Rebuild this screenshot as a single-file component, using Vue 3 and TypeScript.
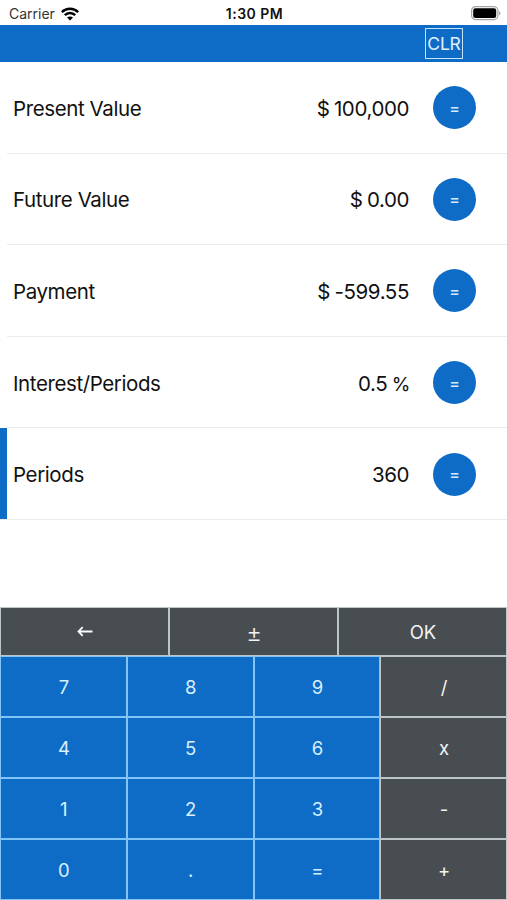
<script setup lang="ts">
interface Field {
  label: string
  prefix?: string
  value: string
  suffix?: string
  active?: boolean
}

interface Key {
  text: string
  tone: 'blue' | 'slate'
}

const fields: Field[] = [
  { label: 'Present Value', prefix: '$', value: '100,000' },
  { label: 'Future Value', prefix: '$', value: '0.00' },
  { label: 'Payment', prefix: '$', value: '-599.55' },
  { label: 'Interest/Periods', value: '0.5', suffix: '%' },
  { label: 'Periods', value: '360', active: true },
]

const rows = ['789/', '456x', '123-', '0.=+']
const keys: Key[] = rows.flatMap((row) =>
  [...row].map((text, i): Key => ({ text, tone: i === 3 ? 'slate' : 'blue' })),
)
</script>

<template>
  <div class="screen">
    <header class="status">
      <div class="carrier">
        <span>Carrier</span>
        <svg class="wifi" viewBox="0 0 18 14" width="18" height="14">
          <g fill="none" stroke="#000" stroke-width="2.5">
            <path d="M0.8 5.1C5.4 0.6 12.6 0.6 17.2 5.1" />
            <path d="M3.8 8.2C6.8 5.3 11.2 5.3 14.2 8.2" />
          </g>
          <path d="M9 13.6L6 10.6C7.7 9 10.3 9 12 10.6Z" />
        </svg>
      </div>
      <span class="time">1:30 PM</span>
      <svg class="battery" viewBox="0 0 30 15" width="30" height="15">
        <rect x="0.6" y="0.6" width="26.3" height="13" rx="4" fill="#fff" stroke="#a5a5a5" stroke-width="1.2" />
        <rect x="2.2" y="2.2" width="23" height="9.8" rx="2.2" />
        <path d="M28 5v4.4c2-.8 2-3.6 0-4.4z" fill="#a5a5a5" />
      </svg>
    </header>

    <nav class="toolbar">
      <button class="clear">CLR</button>
    </nav>

    <main class="fields">
      <section v-for="field in fields" :key="field.label" class="field" :class="{ active: field.active }">
        <span class="label">{{ field.label }}</span>
        <span class="amount">
          <span v-if="field.prefix">{{ field.prefix }}</span>
          <span>{{ field.value }}</span>
          <span v-if="field.suffix" class="suffix">{{ field.suffix }}</span>
        </span>
        <button class="solve">=</button>
      </section>
    </main>

    <div class="keypad">
      <div class="actions">
        <button class="key slate">
          <svg viewBox="0 0 16 12" width="16" height="12">
            <path d="M15.5 5.5H1.5M5.7 1.1L1.5 5.5L5.7 9.9" fill="none" stroke="#fff" stroke-width="1.8" />
          </svg>
        </button>
        <button class="key slate sign">±</button>
        <button class="key slate">OK</button>
      </div>
      <div class="digits">
        <button v-for="key in keys" :key="key.text" class="key" :class="key.tone">{{ key.text }}</button>
      </div>
    </div>
  </div>
</template>

<style>
body {
  margin: 0;
  background: #fff;
}
</style>

<style scoped>
.screen {
  display: flex;
  flex-direction: column;
  width: 507px;
  height: 900px;
  overflow: hidden;
  background: #fff;
  color: #111;
  font-family: Inter, sans-serif;
}

button {
  margin: 0;
  padding: 0;
  border: 0;
  font: inherit;
  color: #fff;
}

.status {
  display: grid;
  grid-template-columns: 1fr auto 1fr;
  align-items: center;
  box-sizing: border-box;
  height: 25px;
  padding: 2px 6px 0 9px;
  font-size: 14px;
}

.carrier {
  display: flex;
  align-items: center;
  gap: 6px;
  color: #333;
}

.time {
  margin-right: 1px;
  font-weight: 600;
  letter-spacing: 0.5px;
}

.battery {
  justify-self: end;
}

.toolbar {
  display: flex;
  justify-content: flex-end;
  box-sizing: border-box;
  height: 37px;
  padding: 3px 44px 3px 0;
  background: #0f6cc6;
}

.clear {
  box-sizing: border-box;
  width: 38px;
  border: 1.5px solid #c5e4fb;
  background: none;
  color: #e0f2ff;
  font-size: 17.5px;
  letter-spacing: -0.2px;
}

.fields {
  display: grid;
  grid-template-rows: repeat(5, 91.6px);
  height: 545px;
}

.field {
  display: flex;
  align-items: center;
  box-sizing: border-box;
  margin-left: 7px;
  padding: 1px 31px 0 6px;
  border-bottom: 1px solid #ececec;
  font-size: 20.5px;
  letter-spacing: -0.4px;
}

.field.active {
  margin-left: 0;
  box-shadow: inset 7px 0 #0f6cc6;
  padding-left: 13px;
}

.label,
.amount {
  padding-top: 1px;
}

.label {
  flex: 1;
}

.amount {
  display: flex;
  align-items: baseline;
  gap: 4.5px;
  margin-right: 24px;
}

.suffix {
  margin-right: -1px;
  font-size: 19px;
}

.solve {
  width: 43px;
  height: 43px;
  border-radius: 50%;
  background: #0f6cc6;
  color: #d4ecff;
  font-size: 16px;
  font-weight: 500;
  letter-spacing: 0;
}

.keypad {
  display: flex;
  flex-direction: column;
  height: 293px;
}

.actions {
  display: grid;
  grid-template-columns: repeat(3, 1fr);
  height: 49px;
}

.digits {
  display: grid;
  grid-template-columns: repeat(4, 1fr);
  grid-template-rows: repeat(4, 61px);
}

.key {
  display: flex;
  align-items: center;
  justify-content: center;
  padding-left: 1px;
  border: 1px solid;
  font-size: 18.5px;
}

.blue {
  background: #0f6cc6;
  border-color: #82c3f8;
  color: #d8f0ff;
}

.slate {
  background: #474d51;
  border-color: #bec5c9;
  color: #f4f4f4;
}

.sign {
  padding-top: 3px;
  font-size: 24px;
  font-weight: 300;
}
</style>
